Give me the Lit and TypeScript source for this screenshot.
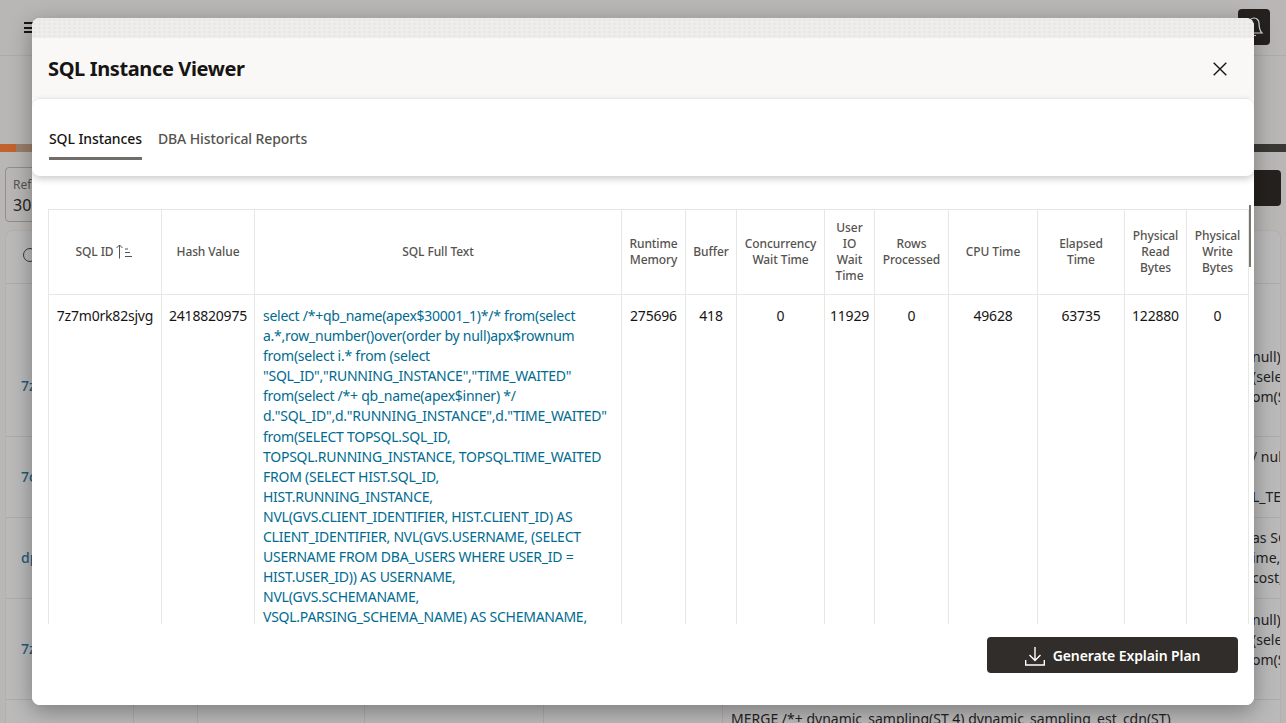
import { LitElement, html, css } from 'lit'
import { customElement } from 'lit/decorators.js'

const SQL_TEXT = `select /*+qb_name(apex$30001_1)*/* from(select a.*,row_number()over(order by null)apx$rownum from(select i.* from (select "SQL_ID","RUNNING_INSTANCE","TIME_WAITED" from(select /*+ qb_name(apex$inner) */ d."SQL_ID",d."RUNNING_INSTANCE",d."TIME_WAITED" from(SELECT TOPSQL.SQL_ID, TOPSQL.RUNNING_INSTANCE, TOPSQL.TIME_WAITED FROM (SELECT HIST.SQL_ID, HIST.RUNNING_INSTANCE, NVL(GVS.CLIENT_IDENTIFIER, HIST.CLIENT_ID) AS CLIENT_IDENTIFIER, NVL(GVS.USERNAME, (SELECT USERNAME FROM DBA_USERS WHERE USER_ID = HIST.USER_ID)) AS USERNAME, NVL(GVS.SCHEMANAME, VSQL.PARSING_SCHEMA_NAME) AS SCHEMANAME, NVL(GVS.MODULE, VSQL.MODULE) AS MODULE`

// line breaks are the ones the reference shows
const HEADERS = [
  'Hash Value',
  'SQL Full Text',
  'Runtime\nMemory',
  'Buffer',
  'Concurrency\nWait Time',
  'User\nIO\nWait\nTime',
  'Rows\nProcessed',
  'CPU Time',
  'Elapsed\nTime',
  'Physical\nRead\nBytes',
  'Physical\nWrite\nBytes',
]

const VALUES = ['7z7m0rk82sjvg', '2418820975', '', '275696', '418', '0', '11929', '0', '49628', '63735', '122880', '0']

const BACK_ROWS = [
  { id: '7z', lines: ['null)', '(sele', 'om(S'] },
  { id: '7c', lines: ['/ nul', '', 'L_TE'] },
  { id: 'dp', lines: ['as SC', 'ime,', 'cost,'] },
  { id: '7z', lines: ['null)', '(sele', 'om(S'] },
]

@customElement('app-root')
export class AppRoot extends LitElement {
  static styles = css`
    :host {
      display: block;
      width: 1286px;
      height: 723px;
      position: relative;
      overflow: hidden;
      font-family: 'Noto Sans', 'Open Sans', sans-serif;
      background: #b8b7b5;
      color: #161513;
    }

    /* page behind the dialog */
    .page {
      height: 723px;
      display: flex;
      flex-direction: column;
    }
    .topbar {
      height: 56px;
      flex: none;
      border-bottom: 1px solid #adacaa;
      display: flex;
      align-items: center;
      justify-content: space-between;
      padding: 0 16px 0 24px;
      box-sizing: border-box;
    }
    .burger {
      width: 10px;
      height: 11px;
      border-top: 2px solid #161513;
      border-bottom: 2px solid #161513;
      position: relative;
      box-sizing: border-box;
    }
    .burger::after {
      content: '';
      position: absolute;
      left: 0;
      right: 0;
      top: 2.5px;
      height: 2px;
      background: #161513;
    }
    .bell {
      width: 32px;
      height: 36px;
      margin-top: -2px;
      background: #24211e;
      border-radius: 4px;
      display: flex;
      justify-content: center;
      align-items: center;
    }
    .hero {
      height: 88px;
      flex: none;
    }
    .stripe {
      height: 8px;
      flex: none;
      background: linear-gradient(90deg, #c2622f 0 16px, #9a7d6a 16px 32px, #b8b7b5 32px 1254px, #3a3835 1254px);
    }
    .filters {
      height: 78px;
      flex: none;
      display: flex;
      justify-content: space-between;
      padding: 15px 5px 0;
      box-sizing: border-box;
    }
    .refresh {
      width: 80px;
      height: 55px;
      border: 1px solid #8f8e8c;
      border-radius: 4px;
      box-sizing: border-box;
      padding: 8px 7px;
      font-size: 12px;
      line-height: 17px;
      color: #55534f;
    }
    .refresh b {
      display: block;
      margin-top: 2px;
      font-weight: 400;
      font-size: 16px;
      line-height: 20px;
      color: #24211e;
    }
    .run {
      width: 80px;
      height: 36px;
      margin-top: 3px;
      background: #24211e;
      border-radius: 4px;
    }
    .grid {
      margin: 0 5px;
      flex: 1;
      border-radius: 8px 8px 0 0;
      background: #bababa;
      border: 1px solid #b2b1af;
      border-bottom: 0;
      min-height: 0;
    }
    .search {
      height: 53px;
      border-bottom: 1px solid #adacaa;
      box-sizing: border-box;
      padding: 17px 0 0 17px;
    }
    .search i {
      display: block;
      width: 12px;
      height: 12px;
      border: 1.5px solid #3a3835;
      border-radius: 50%;
    }
    .grid-head {
      height: 52px;
    }
    .back-row {
      height: 81px;
      border-bottom: 1.5px solid #adacaa;
      box-sizing: border-box;
      display: flex;
      justify-content: space-between;
      padding: 0 0 0 15px;
      font-size: 14px;
      line-height: 20px;
      white-space: nowrap;
    }
    .back-row.tall {
      height: 101px;
    }
    .back-id {
      color: #1f5c7d;
      font-weight: 500;
      align-self: center;
    }
    .back-sql {
      width: 28px;
      overflow: hidden;
      align-self: center;
      color: #24211e;
    }
    .tall .back-sql {
      align-self: flex-start;
      margin-top: 11px;
    }
    .grid-tail {
      height: 24px;
      display: grid;
      grid-template-columns: 128px 64px 167px 179px 179px 1fr;
      font-size: 14px;
      line-height: 20px;
      color: #24211e;
      white-space: nowrap;
    }
    .grid-tail span {
      border-right: 1px solid #adacaa;
      overflow: hidden;
      padding: 9px 0 0 8px;
    }
    .grid-tail span:last-child {
      border-right: 0;
    }

    /* dialog */
    .dialog {
      position: absolute;
      left: 32px;
      top: 18px;
      width: 1222px;
      height: 687px;
      background: #fff;
      border-radius: 8px;
      overflow: hidden;
      display: flex;
      flex-direction: column;
      box-shadow: 0 6px 22px rgba(0, 0, 0, 0.34);
    }
    .texture {
      height: 20px;
      flex: none;
      background-color: #eeedeb;
      background-image: radial-gradient(#e6e5e2 1px, transparent 1.4px);
      background-size: 5px 4px;
    }
    .head {
      height: 60px;
      flex: none;
      background: #f9f8f6;
      display: flex;
      align-items: center;
      justify-content: space-between;
      padding: 2px 27px 0 16px;
      box-sizing: border-box;
    }
    h1 {
      margin: 0;
      font-size: 20px;
      font-weight: 700;
      line-height: 24px;
      letter-spacing: -0.37px;
    }
    .close {
      width: 14px;
      height: 14px;
      display: block;
    }
    .tabs {
      height: 78px;
      flex: none;
      box-sizing: border-box;
      border-top: 1px solid #e9e8e6;
      border-radius: 8px;
      background: #fff;
      box-shadow: 0 3px 7px rgba(0, 0, 0, 0.2);
      display: flex;
      gap: 16px;
      padding: 24px 0 0 17px;
      position: relative;
      font-size: 14px;
      letter-spacing: -0.1px;
    }
    .tab {
      height: 37px;
      line-height: 32px;
      color: #55534f;
      font-weight: 500;
      box-sizing: border-box;
    }
    .tab.on {
      color: #161513;
      border-bottom: 3px solid #6f6e6a;
    }
    .body {
      flex: 1;
      min-height: 0;
      position: relative;
      padding: 33px 0 0 16px;
      overflow: hidden;
    }
    .bar {
      position: absolute;
      left: 1217px;
      top: 29px;
      width: 2px;
      height: 62px;
      background: #77766f;
    }
    .table {
      display: grid;
      grid-template-columns: 113px 93px 367px 64px 51px 88px 50px 74px 89px 87px 62px 62px;
      grid-template-rows: 85px 500px;
      width: 1201px;
      border-top: 1px solid #e8e7e5;
      border-left: 1px solid #e8e7e5;
      box-sizing: border-box;
    }
    .th,
    .td {
      box-sizing: border-box;
      border-right: 1px solid #e8e7e5;
      border-bottom: 1px solid #e8e7e5;
      text-align: center;
    }
    .th {
      display: flex;
      align-items: center;
      justify-content: center;
      padding: 0 2px;
      font-size: 12px;
      line-height: 16px;
      font-weight: 500;
      letter-spacing: -0.1px;
      color: #55534f;
      white-space: pre-line;
    }
    .th svg {
      margin-left: 3px;
      flex: none;
    }
    .td {
      padding: 11px 4px 0;
      font-size: 14px;
      line-height: 20px;
      letter-spacing: -0.2px;
      color: #161513;
    }
    .td.sql {
      text-align: left;
      padding: 11px 11px 0 8px;
      line-height: 20.1px;
      color: #006b8f;
      letter-spacing: -0.25px;
    }
    .foot {
      height: 81px;
      flex: none;
      background: #fff;
      position: relative;
      display: flex;
      justify-content: flex-end;
      padding: 13px 16px 0 0;
      box-sizing: border-box;
    }
    .gen {
      width: 251px;
      height: 36px;
      border: 0;
      border-radius: 4px;
      background: #312d2a;
      color: #fff;
      font: 600 14px/36px 'Noto Sans', 'Open Sans', sans-serif;
      letter-spacing: -0.1px;
      display: flex;
      align-items: center;
      justify-content: center;
      gap: 8px;
      padding: 1px 0 0;
    }
  `

  protected override render() {
    return html`
      <div class="page">
        <div class="topbar">
          <div class="burger"></div>
          <div class="bell">
            <svg width="20" height="22" viewBox="0 0 20 22" fill="none" stroke="#d5dde0" stroke-width="1.2">
              <path d="M10 2a5 5 0 0 1 5 5c0 5 1 8 3 10H2c2-2 3-5 3-10a5 5 0 0 1 5-5ZM8 19.500h4" />
            </svg>
          </div>
        </div>
        <div class="hero"></div>
        <div class="stripe"></div>
        <div class="filters">
          <div class="refresh">Refresh<b>30</b></div>
          <div class="run"></div>
        </div>
        <div class="grid">
          <div class="search"><i></i></div>
          <div class="grid-head"></div>
          ${BACK_ROWS.map(
            (r, i) => html`<div class="back-row ${i === 0 || i === 3 ? 'tall' : ''}">
              <span class="back-id">${r.id}</span>
              <span class="back-sql">${r.lines.map((l) => html`<div>${l || '\u00a0'}</div>`)}</span>
            </div>`
          )}
          <div class="grid-tail">
            <span></span><span></span><span></span><span></span><span></span>
            <span>MERGE /*+ dynamic_sampling(ST 4) dynamic_sampling_est_cdn(ST)</span>
          </div>
        </div>
      </div>

      <div class="dialog">
        <div class="texture"></div>
        <div class="head">
          <h1>SQL Instance Viewer</h1>
          <svg class="close" viewBox="0 0 14 14" fill="none" stroke="#161513" stroke-width="1.4">
            <path d="M.7.7l12.6 12.6M13.3.7.7 13.3" />
          </svg>
        </div>
        <div class="tabs">
          <div class="tab on">SQL Instances</div>
          <div class="tab">DBA Historical Reports</div>
        </div>
        <div class="body">
          <div class="table">
            <div class="th">SQL ID<svg width="18" height="16" viewBox="0 0 18 16" fill="none" stroke="#55534f" stroke-width="1"><path d="M3.500 14.500V1M.5 4 3.500 1l3 3M9 5h3M9 8.500h5M9 12.500h7" /></svg></div>
            ${HEADERS.map((h) => html`<div class="th">${h}</div>`)}
            ${VALUES.map((v, i) =>
              i === 2 ? html`<div class="td sql">${SQL_TEXT}</div>` : html`<div class="td">${v}</div>`
            )}
          </div>
          <div class="bar"></div>
        </div>
        <div class="foot">
          <button class="gen">
            <svg width="20" height="20" viewBox="0 0 20 20" fill="none" stroke="#fff" stroke-width="1.4">
              <path d="M10 1v13M4.500 9 10 14.500 15.500 9M.7 14v5h18.600v-5" />
            </svg>
            Generate Explain Plan
          </button>
        </div>
      </div>
    `
  }
}

declare global {
  interface HTMLElementTagNameMap {
    'app-root': AppRoot
  }
}
